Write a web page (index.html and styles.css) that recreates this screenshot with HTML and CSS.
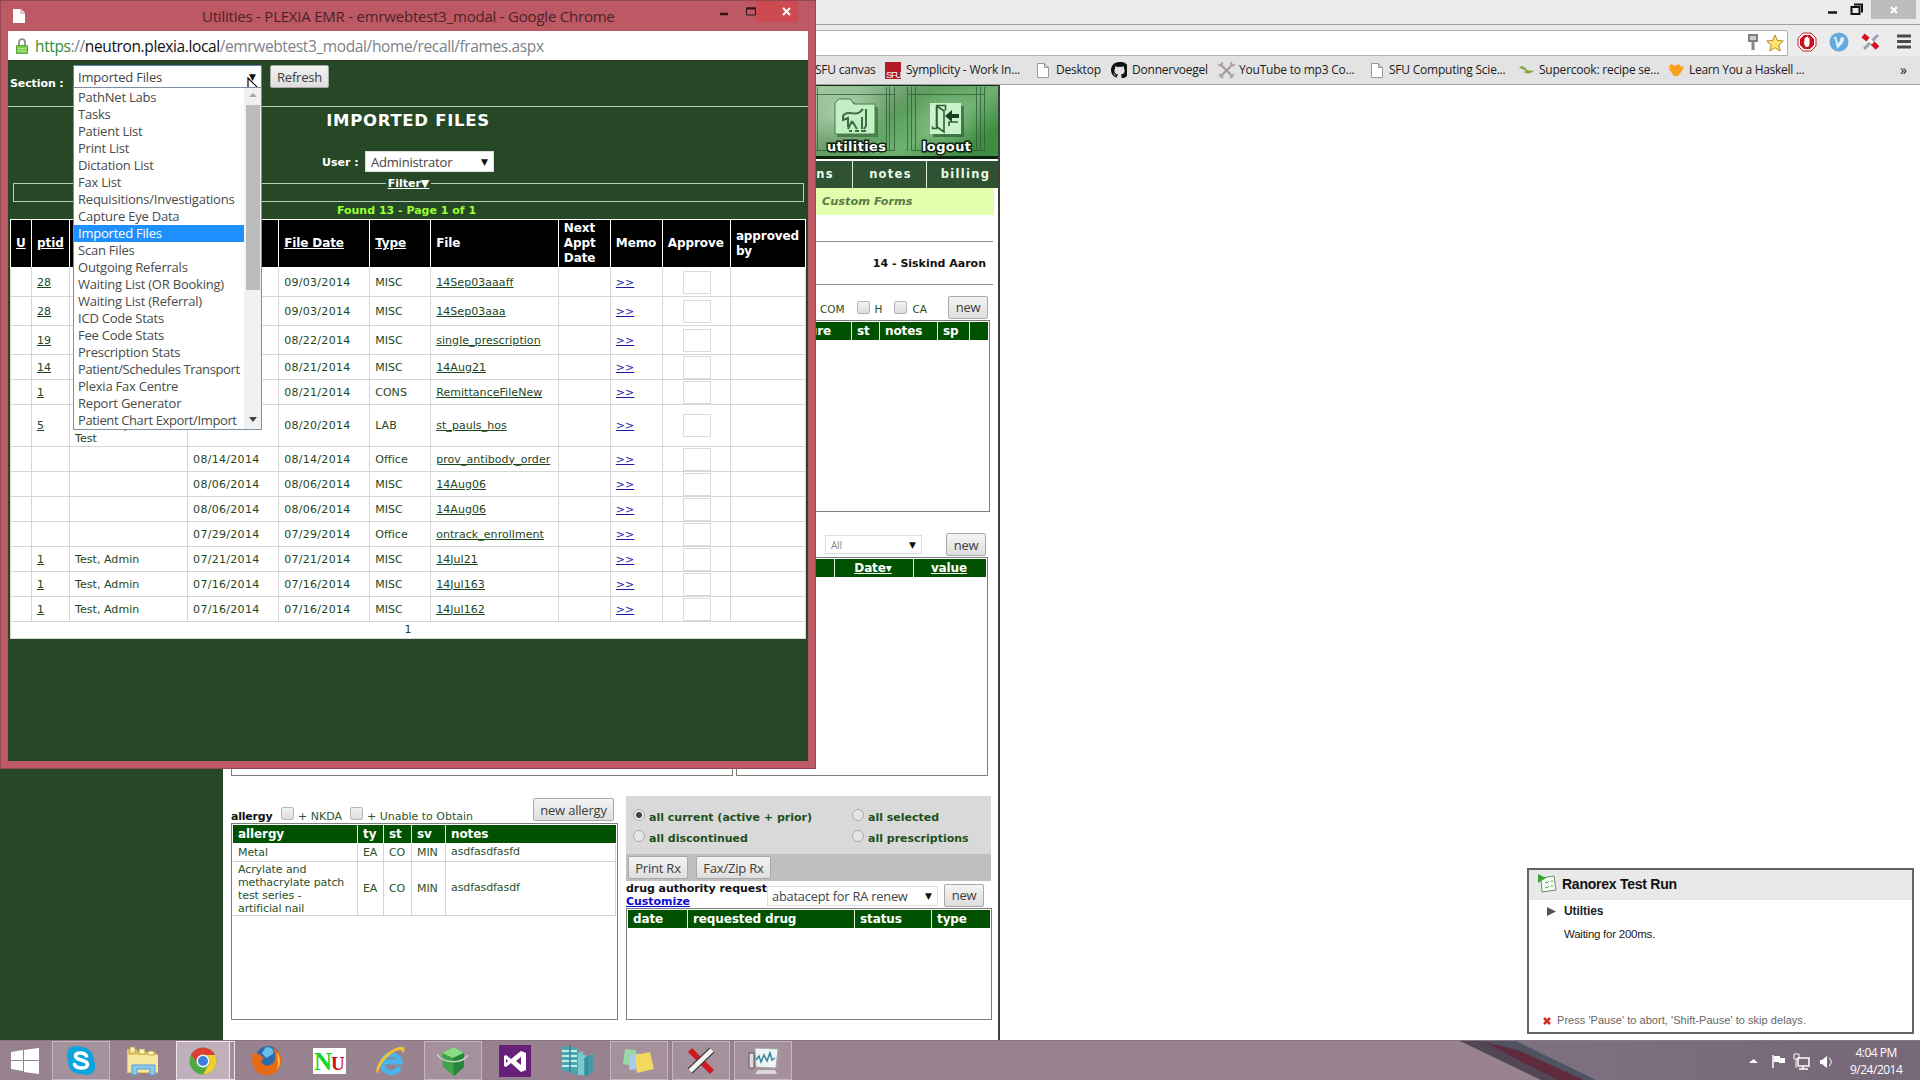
FILE: index.html
```html
<!DOCTYPE html>
<html lang="en">
<head>
<meta charset="utf-8">
<title>PLEXIA EMR</title>
<link rel="stylesheet" href="styles.css">
</head>
<body>
<div class="browser">
  <div class="browser-title">
    <svg class="browser-controls" width="96" height="19" viewBox="0 0 96 19"><path d="M8 12.5h9" stroke="#111" stroke-width="2.4"/><path d="M34 4.5h8v8M31.500 7h8v7h-8z" fill="none" stroke="#111" stroke-width="2"/><path d="M51 0h45v19H51z" fill="#bcbcbc"/><path d="M71 7l6 6M77 7l-6 6" stroke="#fff" stroke-width="2"/></svg>
  </div>
  <div class="toolbar">
    <div class="omnibox">
      <svg width="14" height="20" viewBox="0 0 14 20"><path d="M3 2h8v6H3z" fill="#ccc" stroke="#808080" stroke-width="2"/><path d="M7 8v9M5.500 15.500h2" stroke="#888" stroke-width="3"/></svg>
      <svg width="18" height="18" viewBox="0 0 18 18"><path d="M9 1l2.300 5.500 6 .5-4.500 4 1.400 6L9 13.700 3.800 17l1.400-6L.7 7l6-.5z" fill="#ffe36e" stroke="#b08a28"/></svg>
    </div>
    <svg width="20" height="20" viewBox="0 0 20 20"><path d="M6 1h8l5 5v8l-5 5H6l-5-5V6z" fill="#fff" stroke="#c3202c"/><path d="M7 3h6l4 4v6l-4 4H7l-4-4V7z" fill="#c80f1c"/><path d="M6.500 9l1 1V6h1.200v3V5H10v4-4.500h1.200V9 6h1.300v5c0 3-1 4-2.800 4S7.500 13 6.500 9z" fill="#fff"/></svg>
    <svg width="20" height="20" viewBox="0 0 20 20"><circle cx="10" cy="10" r="9.500" fill="#66a9dc"/><path d="M4 6l3-1.500 2 7c2-2 3-5 2-6h4c1 3-3 9-7 11L6 7z" fill="#dff0fc"/></svg>
    <svg width="20" height="20" viewBox="0 0 20 20"><path d="M17 3L3 17" stroke="#9aa2b4" stroke-width="3"/><path d="M2 3.500l5 4M11.500 11l5 5" stroke="#d3131d" stroke-width="5"/><path d="M8 8l4 3" stroke="#fff" stroke-width="3"/></svg>
    <svg class="menu" width="14" height="16" viewBox="0 0 14 16"><path d="M1 2h12M1 7.500h12M1 13h12" stroke="#4a4a4a" stroke-width="3" stroke-linecap="round"/></svg>
  </div>
  <div class="bookmarks">
    <span class="bm bm-canvas">SFU canvas</span>
    <span class="bm bm-symp"><svg width="16" height="17" viewBox="0 0 16 17"><path d="M0 0h16v17H0z" fill="#b31b28"/><text x="1" y="15.500" class="sfu">SFU</text></svg>Symplicity - Work In...</span>
    <span class="bm bm-desk"><svg width="12" height="15" viewBox="0 0 12 15"><path d="M.5.5h7l4 4v10H.5zM7.500.5v4h4" fill="#fff" stroke="#999"/></svg>Desktop</span>
    <span class="bm bm-git"><svg width="16" height="16" viewBox="0 0 16 16"><path d="M8 0C3.580 0 0 3.580 0 8c0 3.540 2.290 6.530 5.470 7.590.4.070.55-.17.55-.38v-1.490c-2.010.37-2.530-.49-2.690-.94-.5-.9-1.400-1-.8-1.300.8-.2 1.500 1.100 1.700 1.400.72 1.210 1.870.87 2.330.66.070-.52.28-.87.51-1.070-1.780-.2-3.640-.89-3.640-3.950 0-.87.31-1.590.82-2.150-.08-.2-.36-1.020.08-2.120 0 0 .67-.21 2.200.82a7.600 7.600 0 014 0c1.530-1.040 2.200-.82 2.200-.82.44 1.100.16 1.920.08 2.120.51.56.82 1.270.82 2.150 0 3.070-1.870 3.750-3.650 3.950.29.25.54.73.54 1.480v2.200c0 .21.15.46.55.38A8 8 0 008 0z" fill="#111"/></svg>Donnervoegel</span>
    <span class="bm bm-you"><svg width="17" height="17" viewBox="0 0 17 17"><path d="M2 2l13 13M15 2L2 15" stroke="#a09a9c" stroke-width="2"/><path d="M0 3l4 1V0M13 0v4l4-1M1 12l4 4M12 16l4-4" stroke="#b3a6a8" stroke-width="2" fill="none"/></svg>YouTube to mp3 Co...</span>
    <span class="bm bm-comp"><svg width="12" height="15" viewBox="0 0 12 15"><path d="M.5.5h7l4 4v10H.5zM7.500.5v4h4" fill="#fff" stroke="#999"/></svg>SFU Computing Scie...</span>
    <span class="bm bm-cook"><svg width="15" height="10" viewBox="0 0 15 10"><path d="M0 2c4-2 6 0 8 3 2 1 4 0 7 1-4 3-8 3-10 1l2-1C4 4 2 4 0 2z" fill="#87a63c"/></svg>Supercook: recipe se...</span>
    <span class="bm bm-learn"><svg width="16" height="14" viewBox="0 0 16 14"><path d="M0 4l3-3 4 2 4-2 2 3 3-1-2 5-4 5H6L3 9z" fill="#f8a01c"/><path d="M0 3l3 1-2 2z" fill="#ffcf7a"/></svg>Learn You a Haskell ...</span>
    <span class="bm-more">»</span>
  </div>
  <div class="viewport">
    <div class="sidebar"></div>
    <div class="page">
      <div class="banner">
        <svg width="183" height="71" viewBox="0 0 183 71">
          <defs><linearGradient id="bg" x1="0" y1="0" x2="1" y2="0.600"><stop offset="0" stop-color="#a3c9a2"/><stop offset=".25" stop-color="#8db88e"/><stop offset=".43" stop-color="#6a9d6a"/><stop offset=".5" stop-color="#5c9e5c"/><stop offset=".75" stop-color="#6fb170"/><stop offset="1" stop-color="#3f8d42"/></linearGradient>
          <radialGradient id="glow"><stop offset="0" stop-color="#dcf5dc"/><stop offset="1" stop-color="#a8d0a8" stop-opacity="0"/></radialGradient></defs>
          <path d="M0 0h183v71H0z" fill="url(#bg)"/>
          <ellipse cx="35" cy="30" rx="42" ry="34" fill="url(#glow)" opacity=".6"/><ellipse cx="130" cy="35" rx="38" ry="34" fill="url(#glow)" opacity=".3"/>
          <path d="M0 0h183v1H0z" fill="#0c3317"/>
          <path d="M2.500 2v64M0 9.500h80M0 65.500h80M71.500 2v64M74.500 2v64M79.500 2v64M92.500 2v64M96.500 2v64M100.500 2v64M92 9.500h78M96 65.500h74M161.500 2v64M165.500 2v64M169.500 2v64" stroke="#2a5c35" stroke-width="1" opacity=".75"/>
          <path d="M22 22l3-5h14l4 5h20v30H22z" fill="#386b3c" opacity=".7"/>
          <path d="M20 49V18l4-4h11l4 5h21v30z" fill="#c3efc4" stroke="#477f4c"/>
          <path d="M28 32c0-4 4-4 7-4 4 0 6 2 10-1l3-3M51 24v17l-2 3M28 31v4l5-2v9M37 36l-4 8M37 36l5 8M47 32v12M34 46h3M40 46h4M46 46h5" fill="none" stroke="#3b6d41" stroke-width="2"/>
          <path d="M118 21h31v31h-31z" fill="#2f6135" opacity=".7"/><path d="M115 18h31v31h-31z" fill="#c9f3ca"/>
          <path d="M121.500 20.500h9v5M121.500 20.500v23h-4v-2M122 21l7 5v21l-7-5zM134 41v-4h9" fill="none" stroke="#315f36" stroke-width="1.600"/><path d="M130 31l7-6v4h7v4h-7v4z" fill="#183f20"/>
          <text x="12" y="66" class="tile" textLength="59">utilities</text><text x="107" y="66" class="tile" textLength="49">logout</text>
        </svg>
      </div>
      <div class="nav"><span class="nav-a">medications</span><span class="nav-b">notes</span><span class="nav-c">billing</span></div>
      <div class="forms">Custom Forms</div>
      <div class="patient">14 - Siskind Aaron</div>
      <div class="checks"><span><i class="box"></i>COM</span><span><i class="box"></i>H</span><span><i class="box"></i>CA</span><span class="btn">new</span></div>
      <div class="panel proc"><div class="head proc-head"><b>procedure</b><b>st</b><b>notes</b><b>sp</b><b></b></div></div>
      <div class="measure"><span class="select small"><span>All</span><i>▼</i></span><span class="btn">new</span></div>
      <div class="pair"><div class="panel"></div><div class="panel"><div class="head meas-head"><b></b><b><u>Date▾</u></b><b><u>value</u></b></div></div></div>
      <div class="lower">
        <div class="allergy">
          <div class="allergy-bar"><b>allergy</b><i class="box"></i><span>+ NKDA</span><i class="box"></i><span>+ Unable to Obtain</span><span class="btn">new allergy</span></div>
          <div class="panel allergy-panel">
            <div class="head al-grid"><b>allergy</b><b>ty</b><b>st</b><b>sv</b><b>notes</b></div>
            <div class="al-grid al-row"><span>Metal</span><span>EA</span><span>CO</span><span>MIN</span><span>asdfasdfasfd</span></div>
            <div class="al-grid al-row tall"><span>Acrylate and<br>methacrylate patch<br>test series -<br>artificial nail</span><span>EA</span><span>CO</span><span>MIN</span><span>asdfasdfasdf</span></div>
          </div>
        </div>
        <div class="rx">
          <div class="radios"><span><i class="radio on"></i>all current (active + prior)</span><span><i class="radio"></i>all selected</span><span><i class="radio"></i>all discontinued</span><span><i class="radio"></i>all prescriptions</span></div>
          <div class="rx-buttons"><span class="btn">Print Rx</span><span class="btn">Fax/Zip Rx</span></div>
          <div class="request"><div class="req-label">drug authority request<br><a>Customize</a></div><span class="select"><span>abatacept for RA renew</span><i>▼</i></span><span class="btn">new</span></div>
          <div class="panel rx-panel"><div class="head rx-head"><b>date</b><b>requested drug</b><b>status</b><b>type</b></div></div>
        </div>
      </div>
    </div>
  </div>
</div>

<div class="popup">
  <div class="popup-title">
    <svg width="12" height="14" viewBox="0 0 12 14"><path d="M0 0h8l4 4v10H0z" fill="#fff"/><path d="M8 0v4h4" fill="none" stroke="#c98d95"/></svg>
    <span>Utilities - PLEXIA EMR - emrwebtest3_modal - Google Chrome</span>
    <svg class="popup-controls" width="88" height="24" viewBox="0 0 88 24"><path d="M36 0h42v21H36z" fill="#cc4a50"/><path d="M0 13h8" stroke="#321418" stroke-width="2.500"/><path d="M26.500 7h9v7h-9z" fill="none" stroke="#321418"/><path d="M26 7.500h10" stroke="#321418" stroke-width="2"/><path d="M63 7l7 7M70 7l-7 7" stroke="#fff" stroke-width="2"/></svg>
  </div>
  <div class="url"><svg width="12" height="16" viewBox="0 0 12 16"><path d="M3 8V4.500C3 0 9 0 9 4.500V8" fill="none" stroke="#8d8d8d" stroke-width="1.800"/><path d="M.5 7.500h11v8H.5z" fill="#80cc52" stroke="#5aa83a"/><path d="M2 10.500h8M2 13h8" stroke="#b2e58e"/></svg><span><em>https</em>://<strong>neutron.plexia.local</strong>/emrwebtest3_modal/home/recall/frames.aspx</span></div>
  <div class="recall">
    <div class="section-bar">
      <b>Section :</b>
      <div class="combo"><span class="select open"><span>Imported Files</span><i>▼</i></span>
        <div class="list">
          <div class="options"><span>PathNet Labs</span><span>Tasks</span><span>Patient List</span><span>Print List</span><span>Dictation List</span><span>Fax List</span><span>Requisitions/Investigations</span><span>Capture Eye Data</span><span class="chosen">Imported Files</span><span>Scan Files</span><span>Outgoing Referrals</span><span>Waiting List (OR Booking)</span><span>Waiting List (Referral)</span><span>ICD Code Stats</span><span>Fee Code Stats</span><span>Prescription Stats</span><span class="tight">Patient/Schedules Transport</span><span>Plexia Fax Centre</span><span>Report Generator</span><span class="tight">Patient Chart Export/Import</span></div>
          <div class="scroll"><span class="arrow up"></span><span class="thumb"></span><span class="arrow down"></span></div>
        </div>
      </div>
      <span class="btn">Refresh</span>
    </div>
    <h1>IMPORTED FILES</h1>
    <div class="user"><b>User :</b><span class="select"><span>Administrator</span><i>▼</i></span></div>
    <fieldset><legend>Filter▼</legend></fieldset>
    <div class="found">Found 13 - Page 1 of 1</div>
    <table>
      <colgroup><col class="c-u"><col class="c-id"><col class="c-name"><col class="c-date"><col class="c-date"><col class="c-type"><col class="c-file"><col class="c-memo"><col class="c-memo"><col class="c-app"><col class="c-by"></colgroup>
      <tr class="th"><th><u>U</u></th><th><u>ptid</u></th><th></th><th></th><th><u>File Date</u></th><th><u>Type</u></th><th>File</th><th>Next Appt Date</th><th>Memo</th><th>Approve</th><th>approved by</th></tr>
      <tr class="h29"><td></td><td><u>28</u></td><td></td><td></td><td class="d">09/03/2014</td><td>MISC</td><td><u>14Sep03aaaff</u></td><td></td><td><a>&gt;&gt;</a></td><td><i class="approve"></i></td><td></td></tr>
      <tr class="h29"><td></td><td><u>28</u></td><td></td><td></td><td class="d">09/03/2014</td><td>MISC</td><td><u>14Sep03aaa</u></td><td></td><td><a>&gt;&gt;</a></td><td><i class="approve"></i></td><td></td></tr>
      <tr class="h29"><td></td><td><u>19</u></td><td></td><td></td><td class="d">08/22/2014</td><td>MISC</td><td><u>single_prescription</u></td><td></td><td><a>&gt;&gt;</a></td><td><i class="approve"></i></td><td></td></tr>
      <tr><td></td><td><u>14</u></td><td></td><td></td><td class="d">08/21/2014</td><td>MISC</td><td><u>14Aug21</u></td><td></td><td><a>&gt;&gt;</a></td><td><i class="approve"></i></td><td></td></tr>
      <tr><td></td><td><u>1</u></td><td></td><td></td><td class="d">08/21/2014</td><td>CONS</td><td><u>RemittanceFileNew</u></td><td></td><td><a>&gt;&gt;</a></td><td><i class="approve"></i></td><td></td></tr>
      <tr class="h42"><td></td><td><u>5</u></td><td class="patient-name">Hum, Dept O, Dr.<br>Test</td><td class="d">08/20/2014</td><td class="d">08/20/2014</td><td>LAB</td><td><u>st_pauls_hos</u></td><td></td><td><a>&gt;&gt;</a></td><td><i class="approve"></i></td><td></td></tr>
      <tr><td></td><td></td><td></td><td class="d">08/14/2014</td><td class="d">08/14/2014</td><td>Office</td><td><u>prov_antibody_order</u></td><td></td><td><a>&gt;&gt;</a></td><td><i class="approve"></i></td><td></td></tr>
      <tr><td></td><td></td><td></td><td class="d">08/06/2014</td><td class="d">08/06/2014</td><td>MISC</td><td><u>14Aug06</u></td><td></td><td><a>&gt;&gt;</a></td><td><i class="approve"></i></td><td></td></tr>
      <tr><td></td><td></td><td></td><td class="d">08/06/2014</td><td class="d">08/06/2014</td><td>MISC</td><td><u>14Aug06</u></td><td></td><td><a>&gt;&gt;</a></td><td><i class="approve"></i></td><td></td></tr>
      <tr><td></td><td></td><td></td><td class="d">07/29/2014</td><td class="d">07/29/2014</td><td>Office</td><td><u>ontrack_enrollment</u></td><td></td><td><a>&gt;&gt;</a></td><td><i class="approve"></i></td><td></td></tr>
      <tr><td></td><td><u>1</u></td><td>Test, Admin</td><td class="d">07/21/2014</td><td class="d">07/21/2014</td><td>MISC</td><td><u>14Jul21</u></td><td></td><td><a>&gt;&gt;</a></td><td><i class="approve"></i></td><td></td></tr>
      <tr><td></td><td><u>1</u></td><td>Test, Admin</td><td class="d">07/16/2014</td><td class="d">07/16/2014</td><td>MISC</td><td><u>14Jul163</u></td><td></td><td><a>&gt;&gt;</a></td><td><i class="approve"></i></td><td></td></tr>
      <tr><td></td><td><u>1</u></td><td>Test, Admin</td><td class="d">07/16/2014</td><td class="d">07/16/2014</td><td>MISC</td><td><u>14Jul162</u></td><td></td><td><a>&gt;&gt;</a></td><td><i class="approve"></i></td><td></td></tr>
      <tr class="pager"><td colspan="11">1</td></tr>
    </table>
  </div>
</div>

<svg class="cursor" width="13" height="20" viewBox="0 0 13 20"><path d="M1 1v15l3.500-3 2.500 6 3-1.200-2.600-5.800H12z" fill="#fff" stroke="#000" stroke-width="1.200"/></svg>

<div class="runner">
  <div class="runner-head"><svg width="20" height="20" viewBox="0 0 20 20"><path d="M4 4l13-2 2 14-14 2z" fill="#f4fbf2" stroke="#6c8f66"/><path d="M8 8l2 1 2-2M8 13l2 1 2-2M14 7h2M14 12h2" stroke="#53a84a" fill="none"/><path d="M1 0l8 4-8 5z" fill="#35a336"/></svg>Ranorex Test Run</div>
  <div class="runner-body">
    <div class="runner-name"><svg width="10" height="11" viewBox="0 0 10 11"><path d="M0 1l9 4.500L0 10z" fill="#555"/></svg><b>Utilties</b></div>
    <div class="runner-wait">Waiting for 200ms.</div>
    <div class="runner-foot"><svg width="8" height="8" viewBox="0 0 8 8"><path d="M1 1l6 6M7 1L1 7" stroke="#cf2e25" stroke-width="2.500"/></svg>Press 'Pause' to abort, 'Shift-Pause' to skip delays.</div>
  </div>
</div>

<div class="taskbar">
  <svg class="streak" width="500" height="40" viewBox="0 0 500 40"><defs><linearGradient id="tray"><stop offset="0" stop-color="#7e7484"/><stop offset=".6" stop-color="#7a6b7b"/><stop offset="1" stop-color="#776879"/></linearGradient></defs><path d="M40 0h460v40H165z" fill="url(#tray)"/><path d="M40 0h45l84 40h-46z" fill="#504656"/><path d="M64 0h20l82 40h-26L90 15z" fill="#612b3e"/><path d="M62 0h34l82 40h-12L100 10z" fill="#4e5261"/></svg>
  <div class="task start"><svg width="28" height="26" viewBox="0 0 28 26"><path d="M0 4l12-2v10H0zM13 2l15-2v12H13zM0 13h12v10L0 21zM13 13h15v13l-15-2z" fill="#fff"/></svg></div>
  <div class="task run"><svg width="30" height="32" viewBox="0 0 30 32"><path d="M9 1c3 0 4 1 6 1 8 0 13 6 13 14 3 6 0 14-7 14-3 0-4-1-6-1C6 29 2 23 2 16-1 9 2 1 9 1z" fill="#0aa5df"/><path d="M20.500 11c-2-4-11-4-11 0 0 5 12 3 12 8.500 0 5-11 4.500-13 0" fill="none" stroke="#fff" stroke-width="3.600" stroke-linecap="round"/></svg></div>
  <div class="task"><svg width="34" height="30" viewBox="0 0 34 30"><path d="M1 3h9l2 3h16l4 3v18H1z" fill="#e7c55e"/><path d="M2 9h30v17H2z" fill="#f9e8a0"/><path d="M4 1h5v6H4zM13 3h6v5h-6zM22 5h6v4h-6z" fill="#fff2b4" stroke="#a6924c" stroke-width=".7"/><path d="M6 29V19h23v10h-5v-6H11v6z" fill="#8dc9ea" stroke="#4e9fcf"/></svg></div>
  <div class="task run active"><svg width="28" height="28" viewBox="0 0 28 28"><circle cx="14" cy="14" r="13.500" fill="#4caa43"/><path d="M2 8a13.500 13.500 0 0124 0H14a6 6 0 00-6 7z" fill="#df3e35"/><path d="M14 8h12a13.500 13.500 0 01-12 19.500L20 17a6 6 0 00-6-9z" fill="#f8cc2e"/><circle cx="14" cy="14" r="6.500" fill="#fff"/><circle cx="14" cy="14" r="5" fill="#3c80dc"/></svg></div>
  <div class="task"><svg width="32" height="32" viewBox="0 0 32 32"><circle cx="17" cy="13" r="12" fill="#2b69a8"/><path d="M15 2c6 0 8 3 7 7l-7 4-4-5z" fill="#69c1e9"/><path d="M2 7c1 2 3 2 6 2l5 4-3 4c4 6 13 4 14-3 1-5-1-8-2-11 7 3 9 9 8 15-2 9-9 13-15 12C3 30-1 18 2 7z" fill="#e66a16"/><path d="M26 7c4 6 4 12 0 18 1-6 1-11 0-18z" fill="#fbc035"/></svg></div>
  <div class="task"><svg width="33" height="26" viewBox="0 0 33 26"><path d="M0 0h33v26H0z" fill="#fff"/><text x="1" y="22" class="nu-n">N</text><text x="18" y="22" class="nu-u">U</text></svg></div>
  <div class="task"><svg width="32" height="32" viewBox="0 0 32 32"><path d="M24.500 22a9 9 0 11.500-5H9" fill="none" stroke="#48b5ec" stroke-width="5"/><path d="M3 29C-3 25 9 5 25 2c6-1 5 4 3 7 0-5-4-5-9-2C10 12 3 23 3 29z" fill="#f2c22e"/></svg></div>
  <div class="task run"><svg width="32" height="32" viewBox="0 0 32 32"><path d="M5 8l12-6 10 6v14l-10 9-11-9z" fill="#3fa34a"/><path d="M5 8l12-6 10 6-11 5z" fill="#89dc83"/><path d="M16 13l11-5v14l-10 9z" fill="#25853a"/><path d="M0 9c5 9 24 11 31 1" fill="none" stroke="#c6d5cc" stroke-width="1.500"/></svg></div>
  <div class="task"><svg width="32" height="32" viewBox="0 0 32 32"><path d="M0 0h32v32H0z" fill="#68217a"/><path d="M22 6l5 2v17l-5 2L12 18l-5 4-2-1V11l2-1 5 4zM22 12l-5 4 5 4zM7 14v4l2-2z" fill="#fff" fill-rule="evenodd"/></svg></div>
  <div class="task"><svg width="34" height="32" viewBox="0 0 34 32"><path d="M2 1l16 2v27L1 25z" fill="#4ea5af"/><path d="M2 6h15M2 11h15M2 16h15M2 21h15" stroke="#c3eff0" stroke-width="2"/><path d="M18 8l5-2 1 22-6 2zM19 10h7v20h-7z" fill="#78c8ce"/><path d="M24 13l9-4v18l-9 5z" fill="#429aaa"/><path d="M10 0v27M27 12v19" stroke="#318490" stroke-width="1.500"/></svg></div>
  <div class="task run"><svg width="32" height="27" viewBox="0 0 32 27"><path d="M2 2l11 1-2 16-11-2z" fill="#99d7a5"/><path d="M7 8l9-2 2 16-12 1z" fill="#a9cceb"/><path d="M12 8l15-3 4 17-17 4z" fill="#f2d85c"/></svg></div>
  <div class="task run"><svg width="28" height="28" viewBox="0 0 28 28"><path d="M3 3l22 22" stroke="#cf1921" stroke-width="6"/><path d="M25 3L3 24" stroke="#333" stroke-width="7"/><path d="M25 3L3 24" stroke="#f4f1f1" stroke-width="4.500"/></svg></div>
  <div class="task run"><svg width="32" height="28" viewBox="0 0 32 28"><path d="M8 1l23 1-2 19-20-1z" fill="#edf5f5" stroke="#aaa"/><path d="M9 13l3-4 2 6 3-7 3 6 3-8 2 7 3-2" fill="none" stroke="#31859a" stroke-width="1.500"/><path d="M2 6h5v15H2z" fill="#ddd" stroke="#555"/><path d="M11 23h17l2 4H8z" fill="#d9d9d9"/></svg></div>
  <div class="tray">
    <svg width="90" height="20" viewBox="0 0 90 20"><path d="M0 12l4.500-4 4.500 4z" fill="#fff"/><path d="M24 4v13" stroke="#fff" stroke-width="1.500"/><path d="M25 5h6v2h5v5h-6v-1h-5z" fill="#fff"/><path d="M49 7h11v8H49zM54 15v3M50 18h9" fill="none" stroke="#fff" stroke-width="1.500"/><path d="M45 3h5v5h-5zM47 8v9" fill="none" stroke="#fff"/><path d="M71 9h2l5-4v12l-5-4h-2z" fill="#fff"/><path d="M80 7c3 3 3 5 0 8" fill="none" stroke="#fff"/></svg>
    <div class="clock">4:04 PM<br>9/24/2014</div>
  </div>
</div>
</body>
</html>
```
FILE: styles.css
```css
* { box-sizing: border-box; }
body { margin: 0; width: 1920px; height: 1080px; overflow: hidden; display: flex; flex-direction: column; background: #fff; font: 11px/13px "DejaVu Sans", sans-serif; color: #1f4f1f; position: relative; }
i, em { font-style: normal; }
svg { display: block; flex: none; }
a { color: #1a1aae; text-decoration: underline; }

/* main browser window */
.browser { height: 1040px; display: flex; flex-direction: column; }
.browser-title { height: 25px; background: #ebebeb; border-bottom: 1px solid #a0a0a0; display: flex; justify-content: flex-end; padding-right: 4px; }
.toolbar { height: 31px; background: #ececec; display: flex; align-items: center; justify-content: flex-end; gap: 12px; padding: 3px 9px 0 0; }
.omnibox { flex: 1; align-self: stretch; margin: 2px -3px 0 0; background: #fff; border: 1px solid #b0b0b0; border-radius: 0 3px 0 0; display: flex; justify-content: flex-end; align-items: center; gap: 6px; padding-right: 3px; }
.menu { margin-left: 4px; }
.bookmarks { height: 29px; background: #e3e3e3; border-bottom: 1px solid #a3a3a3; display: flex; align-items: center; color: #1c1c1c; font: 12px/16px "Open Sans", sans-serif; padding-left: 815px; white-space: nowrap; }
.bm { display: flex; align-items: center; gap: 5px; letter-spacing: -0.22px; }
.bm-canvas { width: 70px; }
.bm-symp { width: 152px; }
.bm-desk { width: 74px; gap: 7px; }
.bm-git { width: 107px; }
.bm-you { width: 153px; gap: 4px; }
.bm-comp { width: 148px; gap: 6px; }
.bm-cook { width: 149px; }
.bm-learn { width: 232px; letter-spacing: -0.3px; }
.bm-more { font-size: 14px; }
.sfu { font: 9px "Liberation Sans", sans-serif; fill: #fff; letter-spacing: -1px; }
.viewport { flex: 1; display: flex; min-height: 0; }
.sidebar { width: 223px; background: #264826; }
.page { width: 777px; background: #fff; border-right: 2px solid #3c413c; display: flex; flex-direction: column; }
.banner { height: 76px; display: flex; justify-content: flex-end; border-bottom: 2px solid #fff; box-shadow: inset 0 -3px #0a2410; }
.tile { font: bold 13px "DejaVu Sans", sans-serif; fill: #fff; stroke: #0e2412; stroke-width: 3px; paint-order: stroke; }
.nav { height: 27px; background: #2f5233; display: flex; justify-content: flex-end; color: #eafbe8; font-weight: bold; line-height: 27px; letter-spacing: 1.3px; font-size: 11.5px; }
.nav span { text-align: center; border-left: 1px solid #e0eee0; }
.nav span.nav-a { width: 130px; padding-right: 18px; text-align: right; }
.nav-b { width: 74px; padding-left: 2px; }
.nav-c { width: 72px; padding-left: 6px; }
.forms { height: 27px; margin-right: 4px; background: #e2ffae; padding-left: 599px; font: italic bold 11.3px/27px "DejaVu Sans", sans-serif; color: #5c7a48; }
.patient { margin: 26px 5px 0 8px; height: 44px; border: solid #8d8d8d; border-width: 1px 0; text-align: right; padding-right: 7px; font-weight: bold; line-height: 44px; color: #111; }
.checks { height: 35px; display: flex; justify-content: flex-end; align-items: center; padding: 9px 10px 0 0; }
.checks span { display: flex; gap: 5px; align-items: center; padding-top: 4px; margin-right: 12px; font-size: 10.5px; }
.box { display: block; width: 13px; height: 13px; border: 1px solid #b5b5b5; background: linear-gradient(#f2f2f2, #dcdcdc); border-radius: 2px; flex: none; }
.checks .box { margin-top: -4px; }
.btn, .checks .btn { display: flex; align-items: center; justify-content: center; padding: 0; height: 23px; border: 1px solid #a9a9a9; border-radius: 2px; background: linear-gradient(#f4f4f4, #dedede); color: #3d3d3d; font: 13px/16px "Open Sans", sans-serif; letter-spacing: -0.2px; width: 40px; white-space: nowrap; }
.checks .btn { margin: 0 0 0 9px; }
.select { display: flex; align-items: center; justify-content: space-between; background: #fff; border: 1px solid #ddd; height: 20px; padding: 0 5px; font: 13px/16px "Open Sans", sans-serif; color: #444; white-space: nowrap; letter-spacing: -0.2px; }
.select i { font: 9px/12px "DejaVu Sans", sans-serif; color: #111; letter-spacing: 0; }
.panel { border: 1px solid #7c807c; background: #fff; }
.head { display: grid; background: #005200; height: 18px; margin: 1px; color: #fff; font-size: 12px; line-height: 18px; letter-spacing: -0.1px; }
.head b + b { border-left: 1px solid #e6efe6; }
.head b { padding-left: 5px; white-space: nowrap; overflow: hidden; }
.proc { height: 192px; margin: 0 8px 0 8px; }
.proc-head { grid-template-columns: 1fr 28px 58px 32px 19px; }
.proc-head b:first-child { text-align: right; padding-right: 20px; }
.measure { display: flex; justify-content: flex-end; align-items: center; gap: 24px; padding: 21px 12px 1px 0; }
.small { width: 97px; height: 19px; font-size: 10px; color: #888; }
.pair { display: grid; grid-template-columns: 502px 252px; gap: 3px; padding-left: 8px; height: 219px; }
.meas-head { grid-template-columns: 1fr 79px 73px; text-align: center; }
.meas-head b { padding: 0 2px 0 0; }
.lower { display: flex; gap: 8px; margin-top: 20px; padding-left: 8px; height: 224px; }
.allergy { width: 387px; display: flex; flex-direction: column; }
.allergy-bar { height: 27px; display: flex; align-items: center; color: #2e542e; }
.allergy-bar b { width: 50px; color: #111; padding-top: 14px; letter-spacing: -0.2px; }
.allergy-bar .box { margin-top: 7px; }
.allergy-bar span { margin-left: 4px; padding-top: 14px; }
.allergy-bar span + .box { margin-left: 8px; }
.allergy-bar .btn { width: 81px; margin: 0 4px 0 auto; padding: 0; }
.allergy-panel { flex: 1; }
.al-grid { display: grid; grid-template-columns: 124px 26px 28px 34px 1fr; }
.al-row { margin: 0 1px; height: 18px; line-height: 13px; border: solid #d3d3d3; border-width: 0 1px 1px 0; color: #2b512b; }
.al-row span { display: flex; align-items: center; padding-left: 5px; letter-spacing: -0.1px; }
.al-row span + span { border-left: 1px solid #d3d3d3; }
.al-row span:last-child { padding-bottom: 2px; }
.al-row.tall { height: 54px; }
.rx { width: 366px; display: flex; flex-direction: column; }
.radios { height: 58px; width: 365px; background: #d9d9d9; display: grid; grid-template: 21px 21px / 219px 1fr; padding: 11px 0 0 7px; font-weight: bold; color: #1d4f1d; }
.radios span { display: flex; align-items: center; gap: 4px; white-space: nowrap; }
.radio { width: 12px; height: 12px; margin-top: -5px; border: 1px solid #aaa; border-radius: 50%; background: #e6e6e6; }
.radio.on { background: radial-gradient(#444 0 2.500px, #e6e6e6 3.500px); }
.rx-buttons { height: 27px; width: 365px; background: #bfbfbf; display: flex; gap: 8px; padding: 2px; }
.rx-buttons .btn { width: 60px; }
.rx-buttons .btn + .btn { width: 75px; }
.request { height: 27px; display: flex; align-items: center; font-weight: bold; color: #111; }
.req-label { width: 141px; white-space: nowrap; letter-spacing: -0.05px; }
.req-label a { color: #0a0ad0; }
.request .select { width: 171px; margin-top: 2px; padding-left: 4px; font-size: 12.8px; }
.request .btn { margin: 1px 0 0 6px; }
.rx-panel { flex: 1; }
.rx-head { grid-template-columns: 59px 167px 77px 1fr; }

/* recall pop-up window */
.popup { position: absolute; left: 0; top: 0; width: 816px; height: 769px; background: #bd5964; border: 1px solid #934850; padding: 0 7px 7px; display: flex; flex-direction: column; }
.popup-title { height: 30px; display: flex; align-items: center; padding-left: 5px; }
.popup-title span { flex: 1; padding-left: 177px; font: 15px/20px "Open Sans", sans-serif; color: #4c2229; white-space: nowrap; letter-spacing: -0.22px; }
.popup-controls { align-self: flex-start; }
.url { height: 30px; background: #fff; border-bottom: 1px solid #333; display: flex; align-items: center; gap: 7px; padding-left: 8px; font: 15.500px/22px "Open Sans", sans-serif; color: #7c8288; white-space: nowrap; letter-spacing: -0.38px; }
.url em { color: #348a35; }
.url strong { font-weight: normal; color: #111; }
.recall { flex: 1; background: #264826; color: #fff; display: flex; flex-direction: column; }
.section-bar { height: 46px; border-bottom: 1px solid #b8d0b8; display: flex; align-items: flex-start; padding: 4px 0 0 2px; }
.section-bar b { width: 63px; padding-top: 12px; letter-spacing: -0.1px; }
.combo { position: relative; width: 189px; margin-right: 8px; }
.select.open { height: 23px; border: 1px solid #5f80b8; padding: 1px 5px 0 4px; }
.section-bar .btn { width: 59px; }
.list { position: absolute; left: 0; top: 22px; width: 189px; height: 343px; border: 1px solid #7c8fa3; background: #fff; color: #4a4a4a; display: flex; z-index: 2; font: 13px/17px "Open Sans", sans-serif; letter-spacing: -0.22px; overflow: hidden; }
.options { flex: 1; display: flex; flex-direction: column; padding-top: 1px; }
.options span { height: 17px; padding-left: 4px; white-space: nowrap; }
.options .tight { letter-spacing: -0.38px; }
.options .chosen { background: #1e90ff; color: #fff; }
.scroll { width: 17px; background: #f1f1f1; display: flex; flex-direction: column; align-items: center; }
.arrow { width: 0; height: 0; border: 4px solid transparent; }
.up { border-bottom-color: #aaa; margin: 1px 0 8px; }
.down { border-top: 5px solid #444; border-bottom: 0; margin: auto 0 7px; }
.thumb { width: 14px; height: 185px; background: #bcbcbc; }
h1 { margin: 0; height: 27px; font: bold 16.500px/27px "DejaVu Sans", sans-serif; text-align: center; letter-spacing: 0.7px; }
.user { height: 42px; display: flex; align-items: flex-end; padding: 0 0 4px 314px; }
.user b { width: 43px; padding-bottom: 3px; }
.user .select { width: 129px; height: 21px; }
fieldset { margin: 0 4px 0 5px; padding: 0; border: 1px solid #b8d0b8; height: 26px; min-width: 0; }
legend { margin: 0 auto; padding: 0 2px; font-weight: bold; line-height: 15px; text-decoration: underline; }
.found { height: 17px; padding: 1px 3px 0 0; line-height: 15px; font-weight: bold; color: #99ff33; text-align: center; }
table { margin-left: 2px; width: 796px; border-collapse: collapse; table-layout: fixed; background: #fff; color: #1d461d; letter-spacing: 0.050px; }
.c-u { width: 21px; } .c-id { width: 38px; } .c-name { width: 118px; } .c-date { width: 91px; } .c-type { width: 61px; } .c-file { width: 127.500px; } .c-memo { width: 52px; } .c-app { width: 68px; } .c-by { width: 75px; }
tr { height: 25px; }
.th { height: 48px; }
.h29 { height: 29px; }
.h42 { height: 42px; }
.pager { height: 17px; }
th, td { border: 1px solid #d6d6d6; padding: 0 0 0 5px; text-align: left; }
th { background: #000; color: #fff; font-size: 12px; line-height: 15px; border-color: #fff; letter-spacing: -0.1px; }
td.d { letter-spacing: 0.300px; }
td.patient-name { padding-top: 13px; }
.pager td { text-align: center; padding: 0; line-height: 14px; }
.approve { display: block; width: 28px; height: 23px; border: 1px solid #dadada; margin-left: 15px; }
.cursor { position: absolute; left: 247px; top: 77px; }

/* test runner notification */
.runner { position: absolute; left: 1527px; top: 868px; width: 387px; height: 166px; border: 2px solid #646464; background: #fff; font-family: "Liberation Sans", sans-serif; color: #222; display: flex; flex-direction: column; }
.runner-head { height: 30px; background: #e9e9e9; display: flex; align-items: center; gap: 5px; padding: 0 0 2px 8px; font-weight: bold; font-size: 14px; letter-spacing: -0.25px; color: #111; }
.runner-body { flex: 1; display: flex; flex-direction: column; padding: 5px 0 5px 18px; font-size: 12px; }
.runner-name { display: flex; align-items: center; gap: 7px; letter-spacing: -0.080px; }
.runner-wait { padding: 10px 0 0 17px; font-size: 11.500px; letter-spacing: -0.25px; }
.runner-foot { margin-top: auto; margin-left: -4px; display: flex; align-items: center; gap: 6px; color: #666; font-size: 11px; letter-spacing: 0.04px; }

/* taskbar */
.taskbar { height: 40px; background: #98828f; border-top: 1px solid #8a7483; position: relative; display: flex; align-items: stretch; }
.streak { position: absolute; right: 0; top: 0; z-index: 0; }
.task { width: 58px; margin-right: 4px; display: flex; align-items: center; justify-content: center; position: relative; }
.task.start { width: 48px; padding-left: 2px; }
.task.run { border: 1px solid #c5b6c0; background: rgba(255, 255, 255, .12); }
.task.active { width: 54px; margin-right: 8px; background: #bfb0bb; border-color: #efe6ec; box-shadow: 5px 0 0 -1px #a18e9a, 5px 0 0 0 #efe6ec; }
.nu-n { font: bold 25px "Liberation Serif", serif; fill: #12d62b; }
.nu-u { font: bold 19px "Liberation Serif", serif; fill: #cb0e16; }
.tray { margin-left: auto; display: flex; align-items: center; position: relative; gap: 11px; width: 171px; }
.clock { color: #fff; text-align: center; font: 12px/17px "Open Sans", sans-serif; letter-spacing: -0.5px; }
```
